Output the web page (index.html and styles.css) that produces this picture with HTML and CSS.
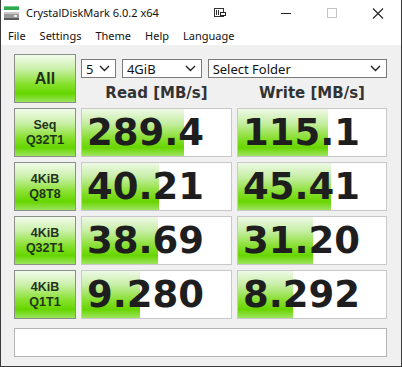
FILE: index.html
```html
<!doctype html>
<html lang="en">
<head>
  <meta charset="utf-8">
  <title>CrystalDiskMark 6.0.2 x64</title>
  <link rel="stylesheet" href="styles.css">
</head>
<body>
  <div class="window">
    <div class="titlebar">
      <svg class="app-icon" width="15" height="14" viewBox="0 0 15 14">
        <rect x="0" y="0" width="15" height="4" fill="#2fa84f"/>
        <rect x="0" y="0" width="15" height="1" fill="#6fd08a"/>
        <rect x="0" y="6" width="15" height="8" fill="#9a9a9a"/>
        <rect x="0" y="6" width="15" height="2" fill="#c8c8c8"/>
        <rect x="0" y="12" width="15" height="2" fill="#5a5a5a"/>
        <rect x="10" y="9" width="3" height="2" fill="#e8e8e8"/>
      </svg>
      <span class="title">CrystalDiskMark 6.0.2 x64</span>
      <svg class="snap" width="12" height="10" viewBox="0 0 12 10">
        <rect x="0.5" y="0.5" width="9" height="8" fill="none" stroke="#333"/>
        <rect x="2" y="2" width="1" height="5" fill="#333"/>
        <rect x="4" y="2" width="1" height="5" fill="#333"/>
        <rect x="6" y="4" width="6" height="4" fill="#222"/>
        <rect x="7" y="5" width="4" height="2" fill="#fff"/>
      </svg>
      <div class="controls">
        <svg width="46" height="24" viewBox="0 0 46 24"><rect x="18" y="12" width="10" height="1" fill="#222"/></svg>
        <svg width="46" height="24" viewBox="0 0 46 24"><rect x="18.5" y="7.5" width="9" height="9" fill="none" stroke="#c4c4c4"/></svg>
        <svg width="46" height="24" viewBox="0 0 46 24"><path d="M18 7.5 L28 17.5 M28 7.5 L18 17.5" stroke="#222" stroke-width="1.1"/></svg>
      </div>
    </div>

    <div class="menubar">
      <span>File</span>
      <span>Settings</span>
      <span>Theme</span>
      <span>Help</span>
      <span>Language</span>
    </div>

    <div class="client">
      <div class="grid">
        <div class="btn all">All</div>
        <div class="top">
          <div class="selects">
            <div class="select count">5<svg width="11" height="7" viewBox="0 0 11 7"><path d="M1 1 L5.5 5.5 L10 1" fill="none" stroke="#222" stroke-width="1.4"/></svg></div>
            <div class="select size">4GiB<svg width="11" height="7" viewBox="0 0 11 7"><path d="M1 1 L5.5 5.5 L10 1" fill="none" stroke="#222" stroke-width="1.4"/></svg></div>
            <div class="select folder">Select Folder<svg width="11" height="7" viewBox="0 0 11 7"><path d="M1 1 L5.5 5.5 L10 1" fill="none" stroke="#222" stroke-width="1.4"/></svg></div>
          </div>
          <div class="heads">
            <div>Read [MB/s]</div>
            <div>Write [MB/s]</div>
          </div>
        </div>

        <div class="btn">Seq<br>Q32T1</div>
        <div class="cell"><div class="bar" style="width: 102px"></div><span>289.4</span></div>
        <div class="cell"><div class="bar" style="width: 90px"></div><span>115.1</span></div>

        <div class="btn">4KiB<br>Q8T8</div>
        <div class="cell"><div class="bar" style="width: 77px"></div><span>40.21</span></div>
        <div class="cell"><div class="bar" style="width: 93px"></div><span>45.41</span></div>

        <div class="btn">4KiB<br>Q32T1</div>
        <div class="cell"><div class="bar" style="width: 76px"></div><span>38.69</span></div>
        <div class="cell"><div class="bar" style="width: 75px"></div><span>31.20</span></div>

        <div class="btn">4KiB<br>Q1T1</div>
        <div class="cell"><div class="bar" style="width: 58px"></div><span>9.280</span></div>
        <div class="cell"><div class="bar" style="width: 55px"></div><span>8.292</span></div>
      </div>

      <div class="comment"></div>
    </div>
  </div>
</body>
</html>
```

FILE: styles.css
```css
html, body {
  margin: 0;
  padding: 0;
}

body {
  width: 402px;
  height: 367px;
  overflow: hidden;
  font-family: "Noto Sans", "Liberation Sans", sans-serif;
}

.window {
  width: 402px;
  height: 367px;
  box-sizing: border-box;
  border: solid 1px #3a3a3a;
  border-top: none;
  background: #f0f0f0;
  display: flex;
  flex-direction: column;
}

.titlebar {
  height: 25px;
  background: white;
  display: flex;
  align-items: center;
  color: #111;
}

.app-icon {
  margin-left: 3px;
}

.title {
  margin-left: 7px;
  font-size: 11px;
}

.snap {
  margin-left: 55px;
  margin-top: 1px;
}

.controls {
  margin-left: auto;
  display: flex;
  margin-top: 1px;
}

.menubar {
  height: 20px;
  background: white;
  display: flex;
  align-items: center;
  gap: 14px;
  padding-left: 7px;
  font-size: 11px;
  color: #111;
}

.client {
  padding: 9px 0 0 13px;
}

.grid {
  display: grid;
  grid-template-columns: 62px 151px 150px;
  grid-auto-rows: 49px;
  column-gap: 5px;
  row-gap: 5px;
}

.btn {
  box-sizing: border-box;
  border: solid 1px #8a8f88;
  background: linear-gradient(#f2fbec 0%, #c9f0a8 30%, #86e02c 62%, #66d600 82%, #9be45c 100%);
  color: #1f3318;
  font-family: "Liberation Sans", sans-serif;
  font-weight: bold;
  font-size: 12.5px;
  line-height: 15px;
  text-align: center;
  display: flex;
  align-items: center;
  justify-content: center;
}

.btn.all {
  font-size: 16px;
}

.top {
  grid-column: 2 / 4;
  display: flex;
  flex-direction: column;
}

.selects {
  margin-top: 5px;
  display: flex;
  gap: 6px;
}

.select {
  box-sizing: border-box;
  height: 19px;
  background: white;
  border: solid 1px #7a7a7a;
  display: flex;
  align-items: center;
  justify-content: space-between;
  padding: 0 5px 0 4px;
  font-size: 13px;
  color: #111;
}

.select.count {
  width: 35px;
}

.select.size {
  width: 80px;
}

.select.folder {
  width: 180px;
}

.heads {
  display: grid;
  grid-template-columns: 151px 150px;
  column-gap: 5px;
  margin-top: 6px;
  font-family: "DejaVu Sans", sans-serif;
  font-weight: bold;
  font-size: 15px;
  color: #333;
  text-align: center;
}

.cell {
  position: relative;
  box-sizing: border-box;
  border: solid 1px #c8c8c8;
  background: white;
  display: flex;
  align-items: center;
  overflow: hidden;
}

.bar {
  position: absolute;
  left: 0;
  top: 0;
  bottom: 0;
  background: linear-gradient(#eef9e6 0%, #c6eea4 30%, #88df30 62%, #68d500 82%, #9ee560 100%);
}

.cell span {
  position: relative;
  padding-left: 5px;
  font-family: "DejaVu Sans", sans-serif;
  font-weight: bold;
  font-size: 37px;
  line-height: 1;
  color: #1e1e1e;
}

.comment {
  margin-top: 9px;
  width: 373px;
  height: 29px;
  box-sizing: border-box;
  background: white;
  border: solid 1px #b4b4b4;
}
```
